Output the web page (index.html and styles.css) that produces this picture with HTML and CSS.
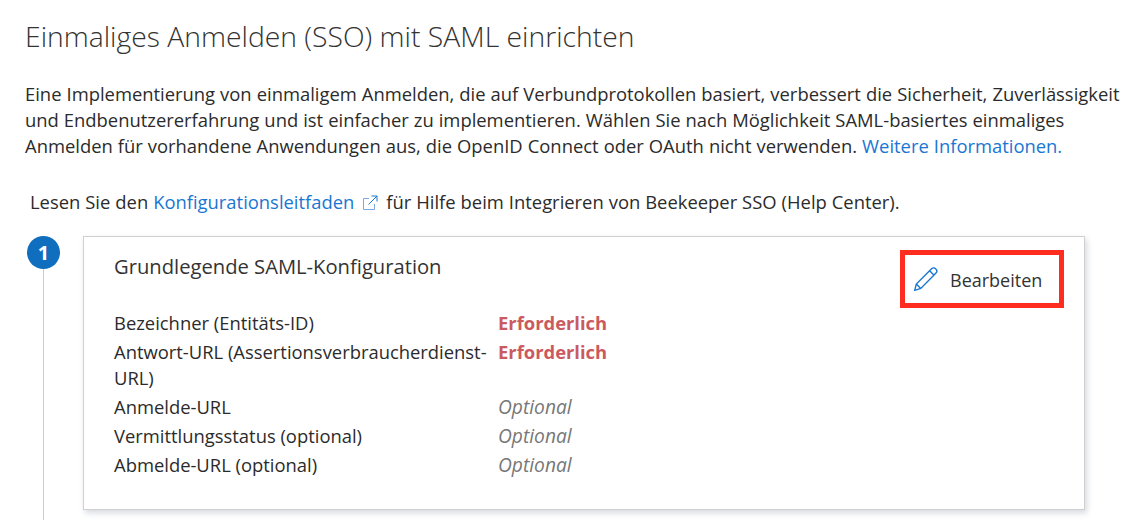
FILE: index.html
```html
<!DOCTYPE html>
<html lang="de">
<head>
<meta charset="utf-8">
<title>SSO</title>
<link rel="stylesheet" href="styles.css">
</head>
<body>
<h1 class="title">Einmaliges Anmelden (SSO) mit SAML einrichten</h1>
<p class="intro">Eine Implementierung von einmaligem Anmelden, die auf Verbundprotokollen basiert, verbessert die Sicherheit, Zuverlässigkeit und Endbenutzererfahrung und ist einfacher zu implementieren. Wählen Sie nach Möglichkeit SAML-basiertes einmaliges Anmelden für vorhandene Anwendungen aus, die OpenID Connect oder OAuth nicht verwenden. <a href="#">Weitere Informationen.</a></p>
<p class="guide">Lesen Sie den <a href="#">Konfigurationsleitfaden</a><svg class="ext" viewBox="0 0 16 16" width="16" height="16"><path d="M7 3.5H1.5v11h11V9" fill="none" stroke="#7aa9e6" stroke-width="1"/><path d="M9.5 1h5.5v5.5M15 1L6.5 9.5" fill="none" stroke="#1976d2" stroke-width="1"/></svg>für Hilfe beim Integrieren von Beekeeper SSO (Help Center).</p>
<div class="step">
  <div class="rail"><span class="badge">1</span><span class="line"></span></div>
  <section class="card">
    <div class="card-head">
      <h2>Grundlegende SAML-Konfiguration</h2>
      <button class="edit"><svg viewBox="0 0 24 24" width="24" height="24"><path d="M.7 23.3l1.6-6.3L17.6 1.7c1.1-1.1 3-1.1 4.2.2 1.2 1.2 1.3 3 .2 4.2L6.8 21.5zM15.6 3.7l4.7 4.7M2.3 17l4.5 4.5" fill="none" stroke="#1976d2" stroke-width="1.4"/></svg><span class="edit-label">Bearbeiten</span></button>
    </div>
    <dl class="rows">
      <dt>Bezeichner (Entitäts-ID)</dt><dd class="req">Erforderlich</dd>
      <dt>Antwort-URL (Assertionsverbraucherdienst-URL)</dt><dd class="req">Erforderlich</dd>
      <dt>Anmelde-URL</dt><dd class="opt">Optional</dd>
      <dt>Vermittlungsstatus (optional)</dt><dd class="opt">Optional</dd>
      <dt>Abmelde-URL (optional)</dt><dd class="opt">Optional</dd>
    </dl>
  </section>
</div>
</body>
</html>
```
FILE: styles.css
```css
* { box-sizing: border-box; }
body { margin: 0; height: 520px; overflow: hidden; background: #fff; color: #2b2b2b; font-family: "Open Sans", "Liberation Sans", sans-serif; font-size: 18.4px; padding: 18px 0 0 25px; display: flex; flex-direction: column; }
a { color: #1976d2; text-decoration: none; }
.title { margin: 0; font-size: 28.3px; font-weight: 300; line-height: 36px; color: #333; }
.intro { margin: 27px 0 0; width: 1100px; line-height: 26px; word-spacing: .25px; }
.guide { margin: 30px 0 0 5px; line-height: 26px; word-spacing: .2px; }
.ext { vertical-align: -2px; margin: 0 8px; }
.step { display: flex; margin-top: 21px; flex: 1; }
.rail { width: 33px; display: flex; flex-direction: column; align-items: center; margin-left: 2px; margin-right: 23px; }
.badge { width: 33px; height: 33px; border-radius: 50%; background: #106ebe; color: #fff; font-weight: 700; font-size: 20px; display: flex; align-items: center; justify-content: center; flex: none; }
.line { width: 1px; flex: 1; background: #ccc; }
.card { width: 1002px; height: 274px; align-self: flex-start; border: 1px solid #d0d0d0; box-shadow: 2px 3px 6px rgba(70,80,110,.22); padding: 15px 20px 0 30px; background: #fff; }
.card-head { display: flex; justify-content: space-between; align-items: flex-start; height: 43px; }
h2 { margin: 0; font-size: 20.2px; font-weight: 400; line-height: 28px; color: #333; }
.edit { width: 164px; height: 58px; border: 5px solid #ff2d1f; background: #fff; display: flex; align-items: center; gap: 12px; padding: 0 0 0 9px; font: inherit; font-size: 18px; color: #333; margin-top: -2px; }
.edit-label { padding-top: 2px; }
.rows { display: grid; grid-template-columns: 384px 1fr; margin: 15px 0 0; line-height: 26px; row-gap: 3px; }
dt { margin: 0; }
dd { margin: 0; }
.req { color: #cb5a60; font-weight: 700; }
.opt { color: #777; font-style: italic; font-size: 19.2px; }
```
